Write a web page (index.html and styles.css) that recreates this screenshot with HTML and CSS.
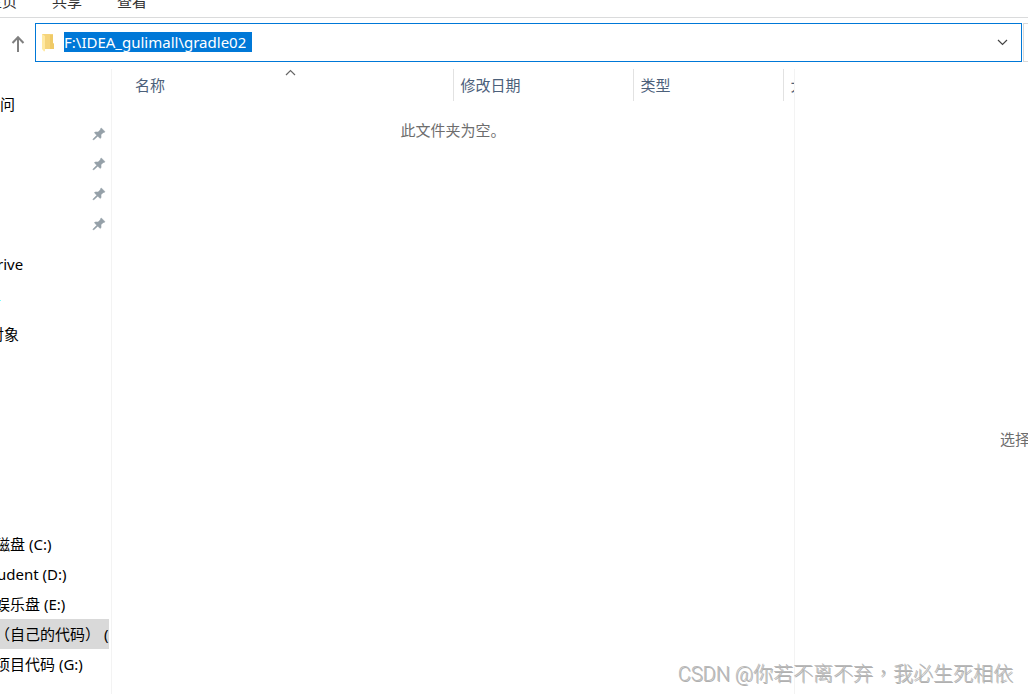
FILE: index.html
```html
<!DOCTYPE html>
<html lang="zh-CN">
<head>
<meta charset="utf-8">
<title>gradle02</title>
<link rel="stylesheet" href="styles.css">
</head>
<body>
<svg class="sprite" aria-hidden="true">
  <symbol id="pin" viewBox="0 0 14 14"><path d="M9.3 1 13 4.7 12 5.7 11.3 5.5 9 7.8 9.1 10.6 8.2 11.4 5.8 9.2 1.6 13 .8 12.2 4.8 8.2 2.4 5.8 3.3 4.9 6.1 5 8.4 2.7 8.3 2Z" fill="#95a0a8" stroke="#95a0a8" stroke-width=".5"/></symbol>
</svg>
<nav class="ribbon">
  <button class="tab" type="button">主页</button>
  <button class="tab" type="button">共享</button>
  <button class="tab" type="button">查看</button>
</nav>
<div class="toolbar">
  <button class="up" type="button" aria-label="上移">
    <svg width="14" height="18" viewBox="0 0 14 18"><path d="M7 17V2M1.5 8 7 2.3 12.5 8" fill="none" stroke="#808080" stroke-width="2"/></svg>
  </button>
  <div class="address">
    <svg class="folder" width="14" height="20" viewBox="0 0 14 20"><path d="M1 2h11v9l1 1v5H4L1 15Z" fill="#f5d47b"/><path d="M9 3h3v8l1 1v5H9Z" fill="#efca67"/><path d="M1 2l3 2v15l-1 .5L1 17Z" fill="#ffe9a2"/></svg>
    <input class="path" type="text" aria-label="地址" value="F:\IDEA_gulimall\gradle02">
    <button class="history" type="button" aria-label="以前的位置">
      <svg width="11" height="7" viewBox="0 0 11 7"><path d="M1 1l4.5 4.5L10 1" fill="none" stroke="#444" stroke-width="1.2"/></svg>
    </button>
  </div>
  <div class="search"></div>
</div>
<div class="panes">
  <aside class="tree">
    <ul class="group">
      <li class="row root">问</li>
      <li class="row"><svg class="pin"><use href="#pin"/></svg></li>
      <li class="row"><svg class="pin"><use href="#pin"/></svg></li>
      <li class="row"><svg class="pin"><use href="#pin"/></svg></li>
      <li class="row"><svg class="pin"><use href="#pin"/></svg></li>
    </ul>
    <ul class="group">
      <li class="row drive">rive</li>
    </ul>
    <ul class="group">
      <li class="row root"><span class="computer"></span></li>
      <li class="row objects">对象</li>
      <li class="row"></li>
      <li class="row"></li>
      <li class="row"></li>
      <li class="row"></li>
      <li class="row"></li>
      <li class="row"></li>
      <li class="row">磁盘 (C:)</li>
      <li class="row drive">udent (D:)</li>
      <li class="row">娱乐盘 (E:)</li>
      <li class="row selected">（自己的代码） (F:)</li>
      <li class="row">项目代码 (G:)</li>
    </ul>
  </aside>
  <main class="files">
    <table class="columns">
      <thead>
        <tr>
          <th class="name">名称<svg class="sort" width="11" height="7" viewBox="0 0 11 7"><path d="M1 6l4.5-4.5L10 6" fill="none" stroke="#666" stroke-width="1.2"/></svg></th>
          <th class="date">修改日期</th>
          <th class="type">类型</th>
          <th class="size">大小</th>
        </tr>
      </thead>
    </table>
    <p class="empty">此文件夹为空。</p>
  </main>
  <section class="preview">选择要预览的文件。</section>
</div>
<div class="watermark">CSDN @你若不离不弃<span class="comma" lang="zh-TW">，</span>我必生死相依</div>
</body>
</html>
```
FILE: styles.css
```css
* { box-sizing: border-box; }

body {
  margin: 0;
  height: 100vh;
  display: flex;
  flex-direction: column;
  overflow: hidden;
  position: relative;
  background: #fff;
  color: #000;
  font: 15px/20px "Noto Sans", "Noto Sans CJK SC", sans-serif;
}

button {
  border: 0;
  padding: 0;
  background: none;
  color: inherit;
  font: inherit;
}

.sprite { display: none; }

.ribbon {
  height: 18px;
  flex: none;
  display: flex;
  align-items: flex-end;
  gap: 35px;
  margin-left: -13px;
  padding-bottom: 6px;
  border-bottom: 1px solid #dadbdc;
  overflow: hidden;
}

.tab { color: #333; flex: none; }

.toolbar {
  flex: none;
  display: flex;
  padding: 5px 0 7px;
}

.up {
  width: 35px;
  padding-top: 2px;
  display: grid;
  place-items: center;
}

.address {
  flex: 1;
  height: 39px;
  display: flex;
  align-items: center;
  border: 1px solid #0078d7;
  padding: 0 13px 1px 5px;
}

.folder { margin-right: 9px; }

.path {
  field-sizing: content;
  height: 20px;
  border: 0;
  padding: 0 6px 0 0;
  outline: 0;
  background: #0078d7;
  color: #fff;
  font: inherit;
}

.history { margin-left: auto; display: flex; }

.search {
  width: 6px;
  margin-left: 1px;
  margin-right: -1px;
  border: 1px solid #d9d9d9;
  border-right: 0;
}

.panes { flex: 1; min-height: 0; display: flex; }

.tree {
  width: 112px;
  flex: none;
  padding: 20px 2px 0 0;
  border-right: 1px solid #f3f3f3;
  overflow: hidden;
}

.group { list-style: none; margin: 0 0 10px; padding: 0; }

.row {
  height: 30px;
  display: flex;
  align-items: center;
  text-indent: -5px;
  white-space: nowrap;
  overflow: hidden;
}

.root { text-indent: 0; }
.drive { text-indent: -3px; }
.objects { text-indent: -11px; }
.selected { background: #d9d9d9; }

.pin { width: 14px; height: 14px; margin-left: auto; margin-right: 3px; }

.computer { width: 1px; height: 1px; background: #7ff; margin-top: -8px; }

.files { width: 682px; flex: none; overflow: hidden; }

.columns {
  width: 100%;
  table-layout: fixed;
  border-collapse: collapse;
}

.columns th {
  height: 32px;
  padding: 0 0 0 7px;
  border-right: 1px solid #e2e2e2;
  color: #4c607a;
  font-weight: 400;
  text-align: left;
  white-space: nowrap;
  overflow: hidden;
}

.columns .name { width: 341px; padding-left: 23px; position: relative; }
.columns .date { width: 180px; }
.columns .type { width: 150px; }
.columns .size { border: 0; }

.sort { position: absolute; top: 0; left: 50%; margin-left: 3px; }

.empty { margin: 19px 0 0; text-align: center; color: #6d6d6d; }

.preview {
  flex: 1;
  min-width: 0;
  padding: 360px 0 0 205px;
  border-left: 1px solid #f3f3f3;
  color: #6d6d6d;
  white-space: nowrap;
  overflow: hidden;
}

.watermark {
  position: absolute;
  right: 15px;
  bottom: 6px;
  color: #bababa;
  font: 300 20px/28px Roboto, "Noto Sans CJK SC", sans-serif;
  text-shadow: 1px 1px 0 #b0b0b0;
}

.comma { font-family: "Noto Sans CJK TC", sans-serif; }
```
